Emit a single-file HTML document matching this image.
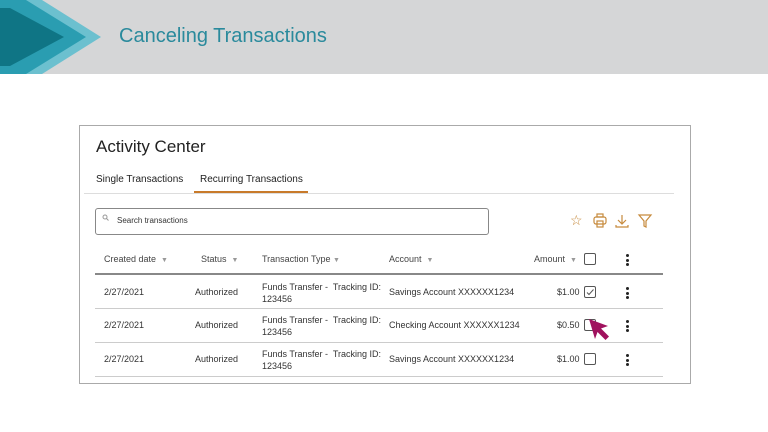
<!DOCTYPE html>
<html><head><style>
body{margin:0;width:768px;height:432px;background:#fff;position:relative;overflow:hidden;font-family:"Liberation Sans",sans-serif;color:#333}
.a{position:absolute;white-space:nowrap}
.hdr{position:absolute;left:0;top:0;width:768px;height:74px;background:#d5d6d7}
.s{font-size:9px;color:#333}
.h{font-size:9px;color:#444}
.h b{font-weight:normal;color:#999;font-size:7px}
.line{position:absolute;left:95px;width:568px;height:1px;background:#ccc}
.cb{position:absolute;width:10px;height:10px;border:1px solid #555;border-radius:2px;left:584px}
.dots{position:absolute;left:626px;width:3px}
.dots i{display:block;width:3px;height:3px;background:#222;border-radius:50%;margin-bottom:1.5px}
</style></head><body>
<div class="hdr"></div>
<svg class="a" style="left:0;top:0" width="110" height="74">
<polygon points="0,0 42,0 101,37 42,74 0,74" fill="#6cc0cf"/>
<polygon points="0,0 26,0 86,37 26,74 0,74" fill="#2a9db1"/>
<polygon points="0,8 10,8 64,37 10,66 0,66" fill="#0f7585"/>
</svg>
<div class="a" style="left:119px;top:25px;font-size:20px;color:#2a8a9c">Canceling Transactions</div>
<div class="a" style="left:79px;top:125px;width:610px;height:257px;border:1px solid #aaa"></div>
<div class="a" style="left:96px;top:137px;font-size:17px;color:#222">Activity Center</div>
<div class="a" style="left:96px;top:174px;font-size:10px;color:#222">Single Transactions</div>
<div class="a" style="left:200px;top:174px;font-size:10px;color:#222">Recurring Transactions</div>
<div class="a" style="left:84px;top:193px;width:590px;height:1px;background:#ddd"></div>
<div class="a" style="left:194px;top:191px;width:114px;height:2px;background:#c87a2a"></div>
<div class="a" style="left:95px;top:208px;width:392px;height:25px;border:1px solid #888;border-radius:3px"></div>
<svg class="a" style="left:102px;top:214px" width="8" height="8" fill="none" stroke="#999"><circle cx="3" cy="3" r="2"/><path d="M4.5 4.5l2 2"/></svg>
<div class="a" style="left:117px;top:216px;font-size:8px;color:#333">Search transactions</div>
<div class="a" style="left:570px;top:212px;font-size:14px;color:#c68a3c">☆</div>
<svg class="a" style="left:593px;top:213px" width="70" height="16" fill="none" stroke="#c68a3c" stroke-width="1.2">
<rect x="1" y="4" width="12" height="7" rx="2"/><rect x="4" y="1" width="6" height="3"/><rect x="4" y="8" width="6" height="6"/>
<path d="M29 2v8M25 7l4 4 4-4M23 12v2h12v-2"/>
<path d="M46 2h12l-5 6v6l-2-1v-5z"/>
</svg>
<div class="a h" style="left:104px;top:254px">Created date &nbsp;<b>▼</b></div>
<div class="a h" style="left:201px;top:254px">Status &nbsp;<b>▼</b></div>
<div class="a h" style="left:262px;top:254px">Transaction Type <b>▼</b></div>
<div class="a h" style="left:389px;top:254px">Account &nbsp;<b>▼</b></div>
<div class="a h" style="left:534px;top:254px">Amount &nbsp;<b>▼</b></div>
<div class="cb" style="top:253px"></div>
<div class="dots" style="top:254px"><i></i><i></i><i></i></div>
<div class="line" style="top:273px;height:2px;background:#888"></div>

<div class="a s" style="left:104px;top:287px">2/27/2021</div>
<div class="a s" style="left:195px;top:287px">Authorized</div>
<div class="a s" style="left:262px;top:281px;line-height:12px">Funds Transfer -&nbsp; Tracking ID:<br>123456</div>
<div class="a s" style="left:389px;top:287px">Savings Account XXXXXX1234</div>
<div class="a s" style="left:557px;top:287px">$1.00</div>
<div class="cb" style="top:286px"></div>
<svg class="a" style="left:584px;top:286px" width="12" height="12" fill="none" stroke="#555"><path d="M3 6.5l2 2 4.5-5"/></svg>
<div class="dots" style="top:287px"><i></i><i></i><i></i></div>
<div class="line" style="top:308px"></div>

<div class="a s" style="left:104px;top:320px">2/27/2021</div>
<div class="a s" style="left:195px;top:320px">Authorized</div>
<div class="a s" style="left:262px;top:314px;line-height:12px">Funds Transfer -&nbsp; Tracking ID:<br>123456</div>
<div class="a s" style="left:389px;top:320px">Checking Account XXXXXX1234</div>
<div class="a s" style="left:557px;top:320px">$0.50</div>
<div class="cb" style="top:319px"></div>
<div class="dots" style="top:320px"><i></i><i></i><i></i></div>
<svg class="a" style="left:587px;top:318px" width="28" height="24"><path d="M2 1L21 8l-7 2.5 8 8-3.5 3.5-8-8-2.5 7z" fill="#a0125e"/></svg>
<div class="line" style="top:342px"></div>

<div class="a s" style="left:104px;top:354px">2/27/2021</div>
<div class="a s" style="left:195px;top:354px">Authorized</div>
<div class="a s" style="left:262px;top:348px;line-height:12px">Funds Transfer -&nbsp; Tracking ID:<br>123456</div>
<div class="a s" style="left:389px;top:354px">Savings Account XXXXXX1234</div>
<div class="a s" style="left:557px;top:354px">$1.00</div>
<div class="cb" style="top:353px"></div>
<div class="dots" style="top:354px"><i></i><i></i><i></i></div>
<div class="line" style="top:376px"></div>
</body></html>
